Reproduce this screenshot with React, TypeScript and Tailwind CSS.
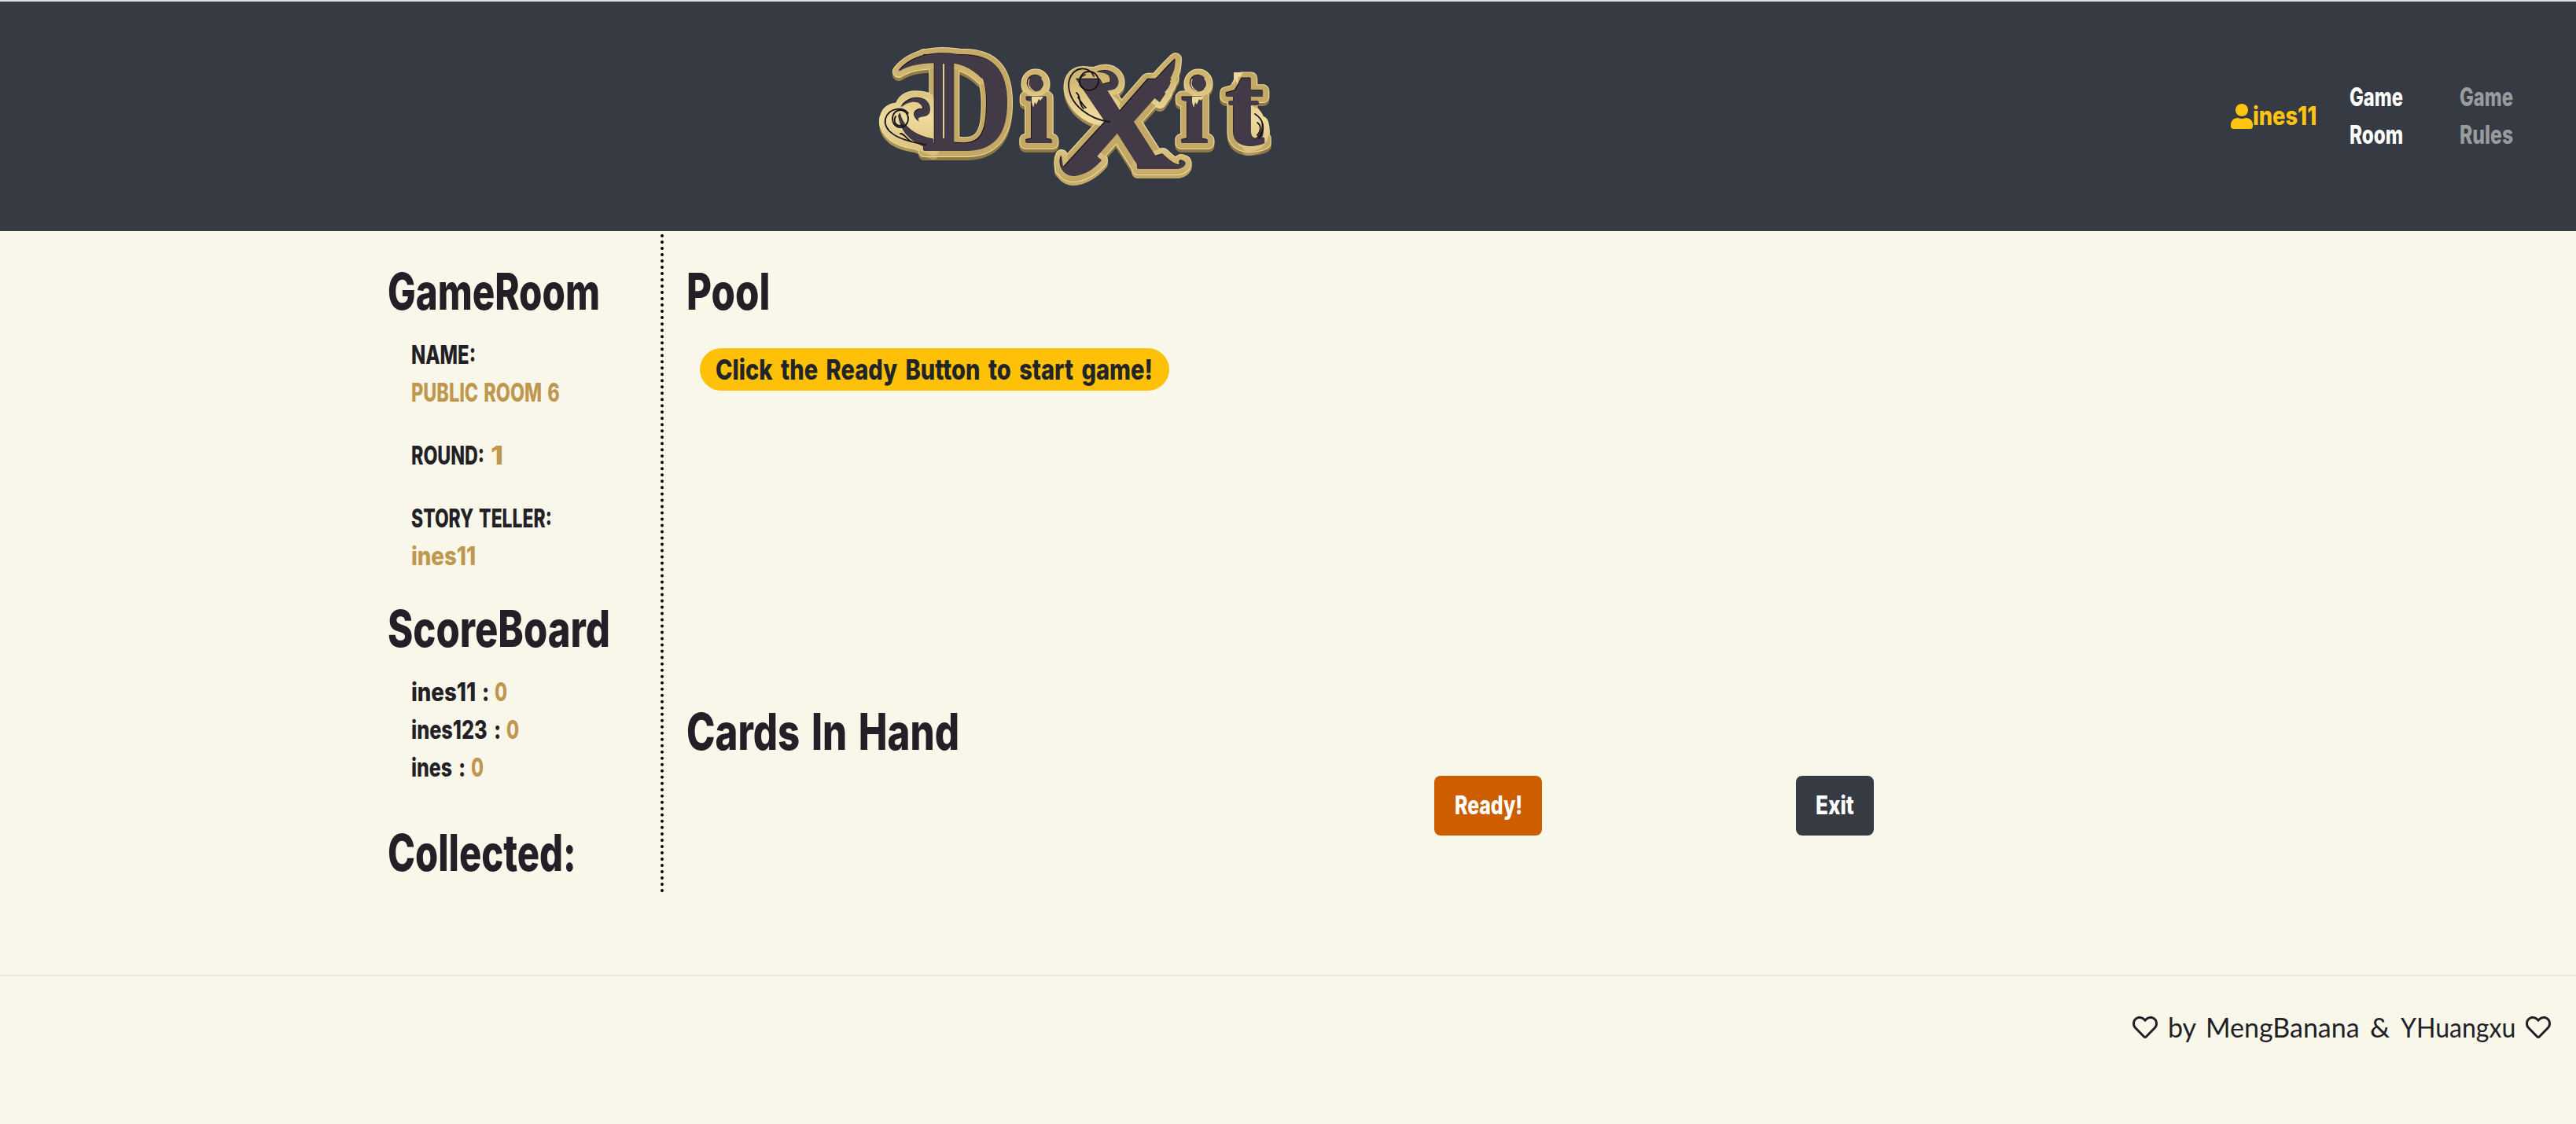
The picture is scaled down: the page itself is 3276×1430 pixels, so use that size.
import { useLayoutEffect, useRef, useState } from "react";
import type { ReactNode } from "react";
import { FaUser, FaRegHeart } from "react-icons/fa";

/* Condenses a line of text horizontally so that it fills its box. */
function Fit({ className, children }: { className: string; children: ReactNode }) {
  const box = useRef<HTMLSpanElement>(null);
  const ink = useRef<HTMLSpanElement>(null);
  const [scale, setScale] = useState(1);
  useLayoutEffect(() => {
    if (box.current && ink.current) {
      setScale(box.current.offsetWidth / ink.current.offsetWidth);
    }
  }, []);
  return (
    <span ref={box} className={"inline-block shrink-0 whitespace-nowrap text-left " + className}>
      <span ref={ink} className="inline-block origin-left" style={{ transform: `scaleX(${scale})` }}>
        {children}
      </span>
    </span>
  );
}

function Heading({ width, children }: { width: string; children: ReactNode }) {
  return (
    <h2 className="flex h-[77px] text-[64px] leading-[77px] font-extrabold [word-spacing:0.08em]">
      <Fit className={width}>{children}</Fit>
    </h2>
  );
}

function Letters() {
  return (
    <>
      <text transform="translate(73 152) scale(0.87 1)" fontSize="186">D</text>
      <text transform="translate(203 142) scale(1.08 1)" fontSize="126">ı</text>
      <text
        transform="translate(250 175) skewX(-7) scale(1.2 1)"
        fontSize="166"
        fontFamily="'Liberation Sans', sans-serif"
      >
        X
      </text>
      <text transform="translate(401 142) scale(1.08 1)" fontSize="126">ı</text>
      <text transform="translate(458 145) scale(1.04 1)" fontSize="150">t</text>
    </>
  );
}

function Flourishes() {
  return (
    <>
      <path d="M44 51C54 37 74 28 100 28C126 28 148 36 162 50L150 60C134 44 118 39 100 40C76 40 58 42 44 51Z" />
      <path d="M46 104C50 122 66 133 88 137V151C66 144 48 134 44 108Z" />
      <path d="M47 97C55 80 84 80 84 99C84 114 64 104 70 115C58 106 66 97 75 99C74 88 58 86 47 97Z" />
      <circle cx="218" cy="66" r="10.5" />
      <circle cx="425" cy="66" r="10.5" />
      <path d="M396 35C386 44 370 62 358 76L376 90L384 78L378 81C384 76 388 71 390 64L387 65C390 58 394 52 395 45Z" />
      <path d="M282 62C280 76 290 92 312 104L318 92C306 82 292 74 282 62Z" />
      <path d="M296 52C316 44 328 60 322 70C316 78 306 72 306 80C297 70 304 66 313 65C316 54 304 52 296 52Z" />
      <path d="M251 158C246 168 252 185 268 184C282 182 292 175 302 164L290 154C274 156 264 176 253 172Z" />
      <path d="M348 175H394C408 176 412 166 406 165C402 162 400 166 402 170C396 170 388 164 380 156L366 160C366 168 362 170 348 170Z" />
      <path d="M490 140C502 138 508 128 506 116C512 136 502 146 488 146Z" />
    </>
  );
}

/* Outlines that widen the gold plate under the thin curls. */
function Plate() {
  return (
    <>
      <path d="M84 84C58 76 48 84 44 96C26 96 20 112 28 126C38 142 60 144 80 147L88 120Z" />
      <path d="M284 50C264 46 254 64 262 84C270 104 288 114 314 119L322 100C302 90 300 78 314 72C326 62 314 48 298 51Z" />
      <path d="M482 96C500 98 504 110 506 122C504 140 490 144 480 142Z" />
    </>
  );
}

function DixitLogo() {
  return (
    <svg
      role="img"
      aria-label="Dixit"
      viewBox="0 -30 540 250"
      className="h-[250px] w-[540px] overflow-visible"
      fontFamily="'Liberation Serif', serif"
      fontWeight="700"
      strokeLinejoin="round"
      strokeLinecap="round"
    >
      <defs>
        <linearGradient id="gold" gradientUnits="userSpaceOnUse" x1="0" y1="20" x2="0" y2="192">
          <stop offset="0" stopColor="#c4a866" />
          <stop offset="0.25" stopColor="#d3b974" />
          <stop offset="0.52" stopColor="#efdb9d" />
          <stop offset="0.75" stopColor="#dcc483" />
          <stop offset="1" stopColor="#bfa35f" />
        </linearGradient>
        <linearGradient id="edge" gradientUnits="userSpaceOnUse" x1="0" y1="20" x2="0" y2="195">
          <stop offset="0" stopColor="#8f7843" />
          <stop offset="0.55" stopColor="#a18a50" />
          <stop offset="1" stopColor="#c8ae68" />
        </linearGradient>
      </defs>
      <g fill="none" stroke="url(#edge)" strokeWidth="16" transform="translate(0 4)">
        <Letters />
        <Flourishes />
        <g fill="url(#edge)" strokeWidth="11"><Plate /></g>
      </g>
      <g fill="none" stroke="#efdc9f" strokeWidth="16">
        <Letters />
        <Flourishes />
        <g fill="#efdc9f" strokeWidth="11"><Plate /></g>
      </g>
      <g fill="none" stroke="url(#gold)" strokeWidth="14">
        <Letters />
        <Flourishes />
        <g fill="url(#gold)" strokeWidth="9"><Plate /></g>
      </g>
      <g fill="#15101a" transform="translate(-0.8 -0.8)">
        <Letters />
        <Flourishes />
      </g>
      <g fill="#423a46">
        <Letters />
        <Flourishes />
      </g>
      <g fill="none" stroke="#17131a" strokeWidth="1.8">
        <path d="M56 104C50 96 32 96 27 111C24 126 40 138 78 144" />
        <ellipse cx="46" cy="111" rx="10" ry="11" />
        <path d="M40 108C36 116 42 122 49 119M46 130C52 130 54 138 60 140" />
        <path d="M292 57C286 42 262 44 260 67C260 94 288 112 312 115" />
        <ellipse cx="286" cy="63" rx="12" ry="12" />
        <path d="M281 55C272 58 272 68 278 72M270 78C276 82 272 92 279 98M272 84C276 90 278 94 282 97" />
        <path d="M497 105C508 112 511 124 502 136M500 116C506 120 504 128 500 132" />
      </g>
      <path d="M101 42V135" stroke="#e6cf8e" strokeWidth="2" />
      <g fill="none" stroke="#e6cf8e" strokeWidth="1.3">
        <path d="M210 61C207 67 210 73 216 76M226 60C230 65 229 70 226 73" />
        <path d="M417 61C414 67 417 73 423 76M433 60C437 65 436 70 433 73" />
      </g>
      <g fill="#ecd898">
        <path d="M213 83H228L224 88L222 86L219 93L217 90L215 97L213 90Z" />
        <path d="M417 83H432L428 88L426 86L423 93L421 90L419 97L417 90Z" />
        <path d="M470 52H481L479 58L476 57L475 68L472 61L470 70Z" />
      </g>
      <path d="M466 91H499" stroke="#423a46" strokeWidth="6" />
    </svg>
  );
}

function Score({ name, nameWidth }: { name: string; nameWidth: string }) {
  return (
    <li className="flex h-12 items-center">
      <Fit className={nameWidth}>{name}</Fit>
      <Fit className="ml-[8px] w-[9px]">:</Fit>
      <Fit className="ml-[7px] w-[16px] text-[#bf974f]">0</Fit>
    </li>
  );
}

export default function App() {
  return (
    <div className="min-h-[1430px] w-full bg-[#f9f7e9] font-['Inter',sans-serif] text-[32px] leading-[48px] font-extrabold text-[#221f26]">
      <header className="flex h-[294px] items-start border-t-2 border-[#dcdedf] bg-[#363a42]">
        <div className="mt-[8px] ml-[1099px]">
          <DixitLogo />
        </div>
        <nav className="mt-[98px] ml-[1198px] flex items-center">
          <div className="flex items-center text-[#ffc312]">
            <FaUser className="h-8 w-7" />
            <Fit className="w-[81px]">ines11</Fit>
          </div>
          <div className="ml-[42px] flex flex-col text-white">
            <Fit className="w-[68px]">Game</Fit>
            <Fit className="w-[68px]">Room</Fit>
          </div>
          <div className="ml-[72px] flex flex-col text-[#999c9f]">
            <Fit className="w-[68px]">Game</Fit>
            <Fit className="w-[68px]">Rules</Fit>
          </div>
        </nav>
      </header>

      <main className="flex h-[946px] pt-[4px] pl-[493px]">
        <aside className="h-[838px] w-[351px] border-r-4 border-dotted border-black pt-[34px]">
          <Heading width="w-[270px]">GameRoom</Heading>
          <div className="mt-[19px] flex flex-col pl-[30px] [word-spacing:0.08em]">
            <Fit className="w-[82px]">NAME:</Fit>
            <Fit className="w-[189px] text-[#bf974f]">PUBLIC ROOM 6</Fit>
            <div className="mt-8 flex gap-[8px]">
              <Fit className="w-[93px]">ROUND:</Fit>
              <Fit className="w-[16px] text-[#bf974f]">1</Fit>
            </div>
            <Fit className="mt-8 w-[179px]">STORY TELLER:</Fit>
            <Fit className="w-[82px] text-[#bf974f]">ines11</Fit>
          </div>
          <div className="mt-[29px]">
            <Heading width="w-[283px]">ScoreBoard</Heading>
          </div>
          <ul className="mt-[19px] pl-[30px]">
            <Score name="ines11" nameWidth="w-[82px]" />
            <Score name="ines123" nameWidth="w-[97px]" />
            <Score name="ines" nameWidth="w-[52px]" />
          </ul>
          <div className="mt-[45px]">
            <Heading width="w-[240px]">Collected:</Heading>
          </div>
        </aside>

        <section className="w-[1900px] pt-[34px] pl-[29px]">
          <Heading width="w-[106px]">Pool</Heading>
          <div className="mt-[34px] ml-[17px] flex h-[54px] w-[597px] items-center rounded-full bg-[#ffc107] pl-[20px] text-[36px] text-[#212529] [word-spacing:0.14em]">
            <Fit className="w-[556px]">Click the Ready Button to start game!</Fit>
          </div>
          <div className="mt-[395px]">
            <Heading width="w-[347px]">Cards In Hand</Heading>
          </div>
          <div className="mt-[18px] ml-[951px] flex gap-[323px] text-white">
            <button className="flex h-[76px] w-[137px] items-center justify-center rounded-lg bg-[#cc5e00]">
              <Fit className="w-[86px]">Ready!</Fit>
            </button>
            <button className="flex h-[76px] w-[99px] items-center justify-center rounded-lg bg-[#363a42]">
              <Fit className="w-[49px]">Exit</Fit>
            </button>
          </div>
        </section>
      </main>

      <footer className="flex h-[188px] items-start justify-end border-t-2 border-[#e6e6e2] pt-[41px] pr-[32px] font-['Lato',sans-serif] text-[34px] font-normal">
        <div className="flex items-center">
          <FaRegHeart className="size-8" />
          <Fit className="ml-[13px] w-[36px]">by</Fit>
          <Fit className="ml-[12px] w-[196px]">MengBanana</Fit>
          <Fit className="ml-[13px] w-[25px]">&amp;</Fit>
          <Fit className="ml-[14px] w-[146px]">YHuangxu</Fit>
          <FaRegHeart className="ml-[13px] size-8" />
        </div>
      </footer>
    </div>
  );
}
